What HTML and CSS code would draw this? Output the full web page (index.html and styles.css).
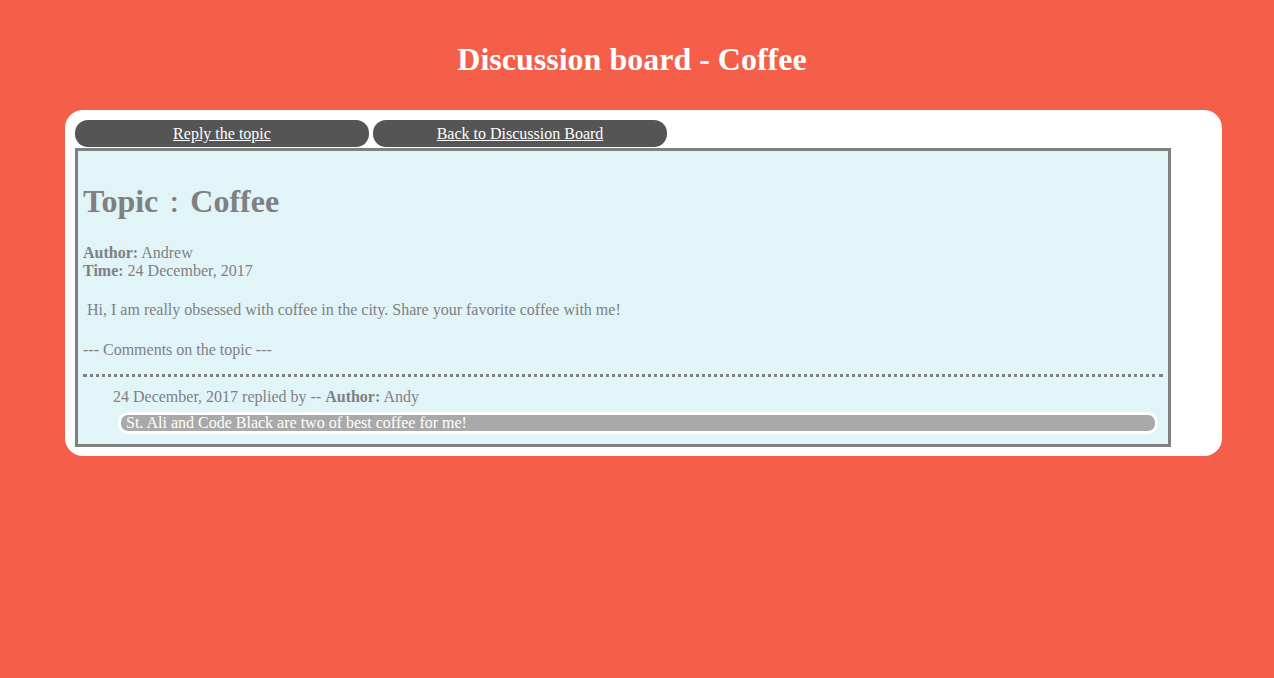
FILE: index.html
```html
<!DOCTYPE html>
<html lang="en">
<head>
<meta charset="utf-8">
<title>Discussion board - Coffee</title>
<link rel="stylesheet" href="styles.css">
</head>
<body>
<h1 class="page-title">Discussion board - Coffee</h1>
<main class="board">
  <nav class="actions">
    <a class="btn" href="#">Reply the topic</a>
    <a class="btn" href="#">Back to Discussion Board</a>
  </nav>
  <section class="topic">
    <h2 class="topic-title">Topic<span class="colon">：</span>Coffee</h2>
    <div class="meta"><b>Author:</b> Andrew<br><b>Time:</b> 24 December, 2017</div>
    <p class="topic-body">&nbsp;Hi, I am really obsessed with coffee in the city. Share your favorite coffee with me!</p>
    <p class="comments-label">--- Comments on the topic ---</p>
    <hr class="divider">
    <div class="reply">
      <div class="reply-meta">24 December, 2017 replied by -- <b>Author:</b> Andy</div>
      <div class="reply-text">St. Ali and Code Black are two of best coffee for me!</div>
    </div>
  </section>
</main>
</body>
</html>
```

FILE: styles.css
```css
html, body {
  margin: 0;
  padding: 0;
}

body {
  background: #f55e48;
  font-family: "Liberation Serif", "Times New Roman", serif;
  font-size: 16px;
  width: 1274px;
  min-height: 678px;
}

.page-title {
  margin: 41px 0 32px;
  padding-right: 10px;
  font-size: 32px;
  line-height: 37px;
  font-weight: bold;
  color: #ffffff;
  text-align: center;
}

.board {
  box-sizing: border-box;
  margin-left: 65px;
  width: 1157px;
  padding: 10px 10px 9px;
  background: #ffffff;
  border-radius: 18px;
}

.actions {
  display: flex;
  gap: 4px;
}

.btn {
  display: block;
  width: 294px;
  height: 27px;
  line-height: 27px;
  background: #555555;
  border-radius: 13px;
  color: #ffffff;
  text-align: center;
  text-decoration: underline;
}

.topic {
  box-sizing: border-box;
  width: 1096px;
  margin-top: 1px;
  padding: 0 5px 10px;
  border: 3px solid #808080;
  background: #e1f4f8;
  color: #808080;
  line-height: 18px;
}

.topic-title {
  margin: 32px 0 24px;
  height: 37px;
  font-size: 32px;
  line-height: 37px;
  font-weight: bold;
}

.colon {
  font-family: "Noto Sans CJK TC", "Noto Sans CJK JP", sans-serif;
  font-size: 22px;
  padding: 0 5px;
  line-height: 0;
}

.meta {
  margin: 0;
}

.topic-body {
  margin: 21px 0 0;
}

.comments-label {
  margin: 22px 0 0;
}

.divider {
  height: 0;
  margin: 15px 0 0;
  border: none;
  border-top: 3px dotted #808080;
}

.reply {
  padding-top: 11px;
}

.reply-meta {
  padding-left: 30px;
}

.reply-text {
  margin: 6px 5px 0 35px;
  padding: 0 5px;
  line-height: 16px;
  background: #a9a9a9;
  border: 3px solid #ffffff;
  border-radius: 10px;
  color: #ffffff;
}
```
